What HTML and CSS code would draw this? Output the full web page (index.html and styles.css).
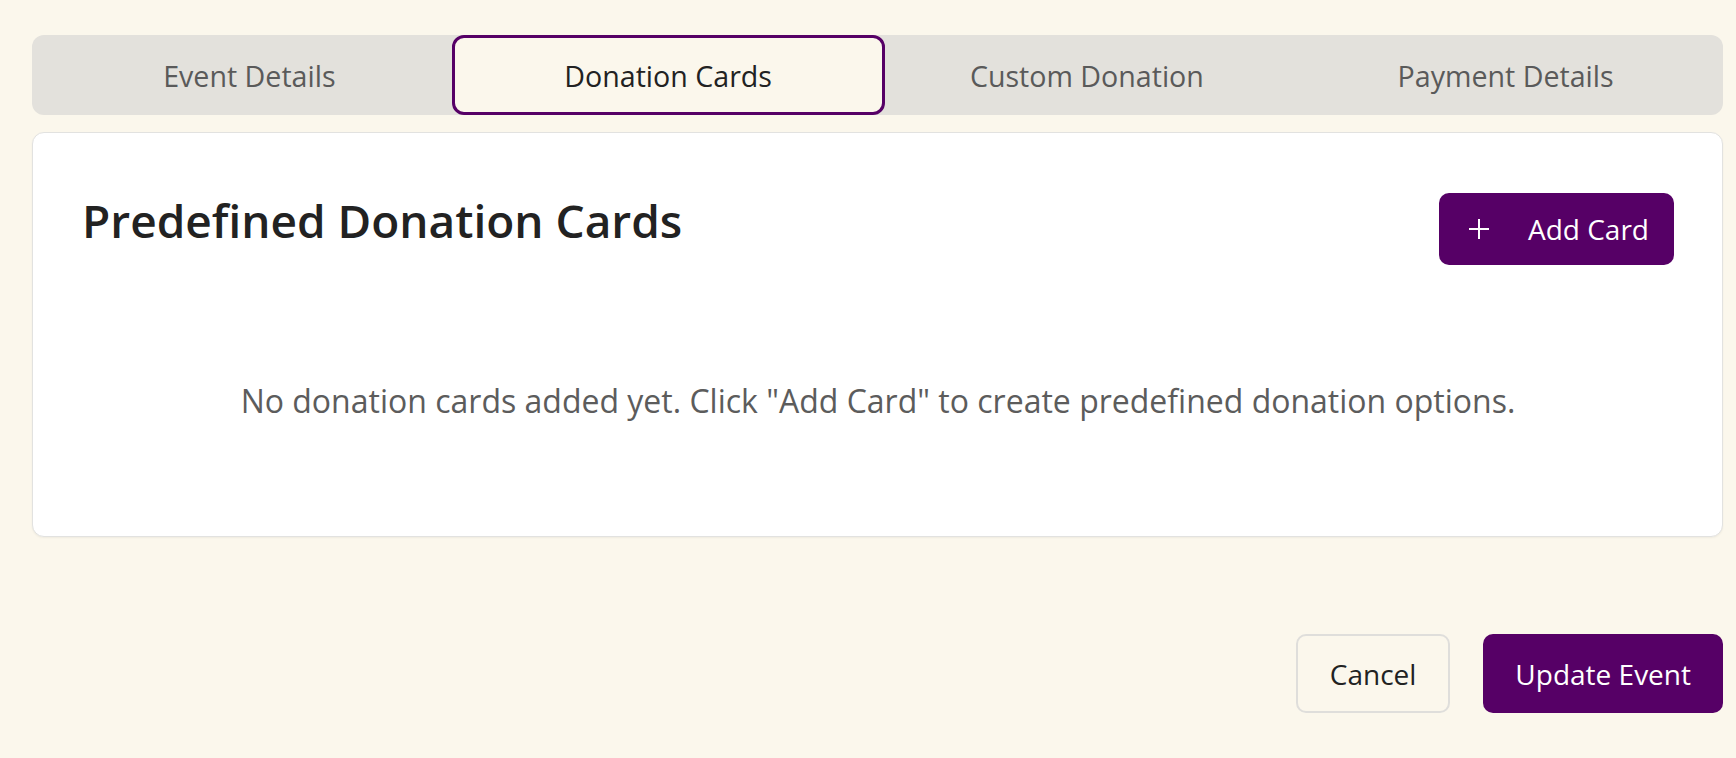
FILE: index.html
```html
<!DOCTYPE html>
<html lang="en">
<head>
<meta charset="utf-8">
<title>Edit Event - Donation Cards</title>
<link rel="stylesheet" href="styles.css">
</head>
<body>
<div class="page">
  <nav class="tabs">
    <button class="tab">Event Details</button>
    <button class="tab active">Donation Cards</button>
    <button class="tab">Custom Donation</button>
    <button class="tab">Payment Details</button>
  </nav>

  <section class="card">
    <div class="card-header">
      <h2 class="card-title">Predefined Donation Cards</h2>
      <button class="btn btn-primary btn-add">
        <svg class="plus" width="22" height="22" viewBox="0 0 22 22" aria-hidden="true">
          <path d="M11 1v20M1 11h20" stroke="#fff" stroke-width="2" fill="none" stroke-linecap="butt"/>
        </svg>
        <span>Add Card</span>
      </button>
    </div>
    <p class="empty">No donation cards added yet. Click "Add Card" to create predefined donation options.</p>
  </section>

  <div class="actions">
    <button class="btn btn-outline">Cancel</button>
    <button class="btn btn-primary">Update Event</button>
  </div>
</div>
</body>
</html>
```

FILE: styles.css
```css
* { box-sizing: border-box; }

html, body {
  margin: 0;
  padding: 0;
  background: #fbf7ec;
  font-family: "Open Sans", "Noto Sans", sans-serif;
  color: #222;
}

.page {
  padding: 35px 13px 0 32px;
}

.tabs {
  display: grid;
  grid-template-columns: repeat(4, 1fr);
  height: 80px;
  padding: 0 8px;
  background: #e3e1dc;
  border-radius: 12px;
}

.tab {
  font-family: inherit;
  font-size: 28.6px;
  font-weight: 500;
  color: #5a5a5a;
  background: transparent;
  border: 0;
  padding: 0;
  display: flex;
  align-items: center;
  justify-content: center;
  cursor: pointer;
}

.tab.active {
  margin: 0 -7px;
  background: #fbf7ec;
  border: 3px solid #560066;
  border-radius: 12px;
  color: #222;
}

.card {
  margin-top: 17px;
  background: #fff;
  border: 1.5px solid #e2e2e0;
  border-radius: 12px;
  box-shadow: 0 1px 2px rgba(0,0,0,0.05);
  padding: 60px 48px 60px 49px;
}

.card-header {
  display: flex;
  justify-content: space-between;
  align-items: flex-start;
  margin-bottom: 61px;
}

.card-title {
  margin: 0;
  font-size: 46px;
  line-height: 1.2;
  font-weight: 600;
  color: #222;
}

.btn {
  font-family: inherit;
  font-size: 28px;
  font-weight: 500;
  border-radius: 10px;
  border: 0;
  padding: 0 32px;
  height: 79px;
  display: inline-flex;
  align-items: center;
  justify-content: center;
  cursor: pointer;
}

.btn-primary {
  background: #560066;
  color: #fff;
}

.btn-add {
  height: 72px;
  padding: 0 25px 0 29px;
  gap: 38px;
}

.plus { display: block; }

.btn-outline {
  background: #fbf7ec;
  color: #222;
  border: 2px solid #dfdedb;
}

.empty {
  margin: 0;
  padding: 51px 0;
  text-align: center;
  font-size: 32px;
  line-height: 48px;
  color: #5c5c5c;
}

.actions {
  display: flex;
  justify-content: flex-end;
  gap: 33px;
  margin-top: 97px;
}
```
